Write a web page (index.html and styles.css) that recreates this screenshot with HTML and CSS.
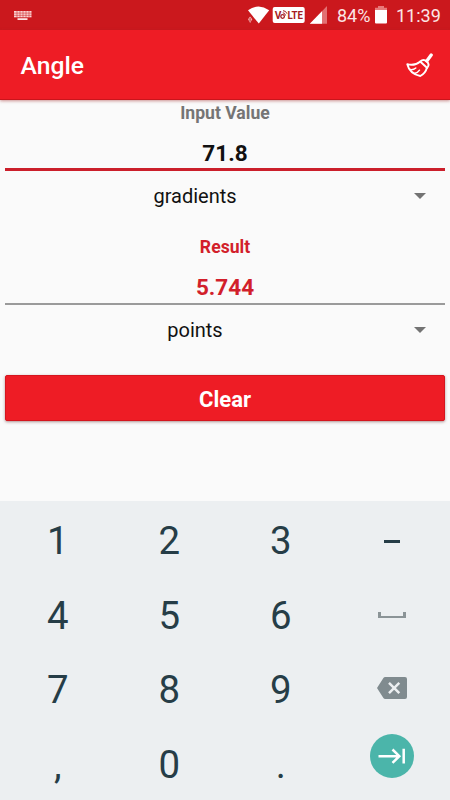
FILE: index.html
```html
<!DOCTYPE html>
<html lang="en">
<head>
<meta charset="utf-8">
<title>Angle</title>
<link rel="stylesheet" href="styles.css">
</head>
<body>
<div class="status">
  <svg class="kbd" width="18" height="10" viewBox="0 0 18 10"><path d="M0 0H17.5V6.3H0Z" fill="#fbd5d4"/><path d="M0 2.1H18M0 4.3H18M3 0V6.5M6 0V6.5M9 0V6.5M12 0V6.5M15 0V6.5" stroke="#cb181d" stroke-width=".5"/><path d="M3.5 7.2h10v1.8h-10Z" fill="#fbe3e3"/></svg>
  <svg class="signals" width="80" height="20" viewBox="0 0 80 20">
    <path d="M0 5.2Q10.5-2.2 21.2 5.2L10.8 18.6Z" fill="#fff"/>
    <path d="M0 14.2L2.1 11.5L4.3 14.2L2.1 18Z" fill="#efb0b0"/><path d="M2.1 13v3.5" stroke="#cb181d" stroke-width=".8"/>
    <rect x="24.7" y="1.9" width="32" height="16" rx="2" fill="#fff"/>
    <text x="26.8" y="13.6" class="volte">V</text>
    <text x="39.4" y="13.6" class="volte" textLength="15.6" lengthAdjust="spacingAndGlyphs">LTE</text>
    <circle cx="34.6" cy="11.5" r="1.8" fill="none" stroke="#a51d22" stroke-width="1.3"/><path d="M34.8 7.8q2-.2 2.8 2.7M35 5.7q3 0 4 3" fill="none" stroke="#a51d22" stroke-width="1"/>
    <path d="M79 1V18.7H62Z" fill="#e27073"/><path d="M74 6.2V18.7H61.8Z" fill="#fff"/>
  </svg>
  <span class="pct">84%</span>
  <svg class="battery" width="12" height="18" viewBox="0 0 12 18"><path d="M3 0h6v1.8h3V5H0V1.8h3Z" fill="#e8797a"/><path d="M0 4h12v12.5q0 1-1 1H1q-1 0-1-1Z" fill="#fff"/></svg>
  <span class="time">11:39</span>
</div>
<header class="bar">
  <h1>Angle</h1>
  <svg width="28" height="26" viewBox="0 0 28 26" fill="none" stroke="#fff" stroke-linejoin="round" stroke-linecap="round"><path d="M25.2 2L20.8 8" stroke-width="3.3"/><path d="M14.2 8.5Q17.5 5.6 20.8 8.5T21.2 15L14.2 8.5" stroke-width="1.9"/><path d="M14 8.7Q8.5 13.2 1.3 11.2Q3.5 20.5 14.3 23Q19.6 20 20.8 15" stroke-width="1.9"/><path d="M4.3 16.6Q7.5 17 9.8 15M8.4 20.4Q11.8 19.8 13.5 17.2" stroke-width="1.5"/></svg>
</header>
<main>
  <div class="label">Input Value</div>
  <div class="field active">71.8</div>
  <div class="select"><span>gradients</span><i></i></div>
  <div class="label result">Result</div>
  <div class="field output">5.744</div>
  <div class="select"><span>points</span><i></i></div>
  <button class="clear">Clear</button>
</main>
<div class="keypad">
  <span>1</span><span>2</span><span>3</span><span><b class="minus"></b></span>
  <span>4</span><span>5</span><span>6</span><span><b class="space"></b></span>
  <span>7</span><span>8</span><span>9</span><span><svg class="del" width="30" height="22" viewBox="0 0 30 22"><path d="M8.2 0H28Q30 0 30 2V20Q30 22 28 22H8.2Q7 22 6.4 21L0 11L6.4 1Q7 0 8.2 0Z" fill="#808b8f"/><path d="M12 5.8L22.3 16.2M22.3 5.8L12 16.2" stroke="#eceff1" stroke-width="2.5"/></svg></span>
  <span>,</span><span>0</span><span>.</span><span><svg class="next" width="44" height="44" viewBox="0 0 44 44"><circle cx="22" cy="22" r="22" fill="#4bb5aa"/><path d="M8.5 22.2H29M22.5 15.5L29.3 22.2L22.5 28.9M33.7 14.8V29.6" fill="none" stroke="#fff" stroke-width="2.5"/></svg></span>
</div>
</body>
</html>
```
FILE: styles.css
```css
* { box-sizing: border-box; }
body {
  margin: 0;
  height: 800px;
  overflow: hidden;
  display: flex;
  flex-direction: column;
  background: #fafafa;
  font-family: Roboto, "Liberation Sans", sans-serif;
}
.status {
  flex: none;
  height: 30px;
  background: #cb181d;
  display: flex;
  align-items: flex-start;
  color: #fbe6e6;
  font-size: 18px;
  line-height: 32px;
}
.kbd { margin: 11px 0 0 14px; }
.signals { margin: 5px 0 0 216px; }
.volte { font: bold 10.2px Roboto, sans-serif; fill: #a51d22; }
.pct { margin-left: 9px; width: 33px; white-space: nowrap; }
.battery { margin: 6px 0 0 5px; }
.time { margin-left: 9px; white-space: nowrap; }
.bar {
  flex: none;
  height: 70px;
  background: #ee1c25;
  border-bottom: 1px solid #c9151c;
  box-shadow: 0 1px 3px rgba(160, 40, 40, .5);
  display: flex;
  align-items: center;
  justify-content: space-between;
  padding: 3px 16px 0 20.5px;
}
.bar h1 { margin: 0 0 2px; font-size: 24.7px; font-weight: 500; color: #fff; }
main {
  flex: none;
  height: 401px;
  padding: 0 5px;
  display: flex;
  flex-direction: column;
  text-align: center;
}
.label { height: 27px; line-height: 26px; font-size: 17.6px; font-weight: 700; color: #757575; }
.field { height: 44px; line-height: 52px; font-size: 22.5px; font-weight: 700; color: #111; }
.active { border-bottom: 3px solid #cb1f2b; }
.select { height: 50px; line-height: 50px; font-size: 20px; color: #111; position: relative; padding-right: 60px; }
.select i {
  position: absolute;
  right: 19px;
  top: 22px;
  border: 6px solid transparent;
  border-top-color: #737373;
  border-bottom: 0;
}
.result { margin-top: 13px; color: #d21f2b; }
.output { color: #d21f2b; height: 44px; border-bottom: 2px solid #9a9a9a; }
.clear {
  flex: none;
  height: 46px;
  margin-top: 20px;
  padding: 2px 0 0;
  border: 1px solid #d5151e;
  border-radius: 2px;
  background: #ee1c25;
  box-shadow: 0 1px 3px rgba(100, 40, 40, .5);
  color: #fff;
  font: 700 22px Roboto, sans-serif;
}
.keypad {
  flex: none;
  height: 299px;
  overflow: hidden;
  padding: 3px 2px 0;
  background: #eceff1;
  display: grid;
  grid-template-columns: repeat(4, 1fr);
  grid-auto-rows: 74.6px;
  color: #263d47;
  font-size: 38.4px;
  line-height: 74.6px;
  text-align: center;
}
.keypad > span { display: flex; justify-content: center; }
.minus { width: 16px; height: 3px; margin-top: 36px; background: #263d47; }
.space { width: 28px; height: 6px; margin-top: 33px; border: solid #8b9497; border-width: 0 3px 2px; }
.del { margin-top: 24px; }
.next { margin-top: 6px; }
```
